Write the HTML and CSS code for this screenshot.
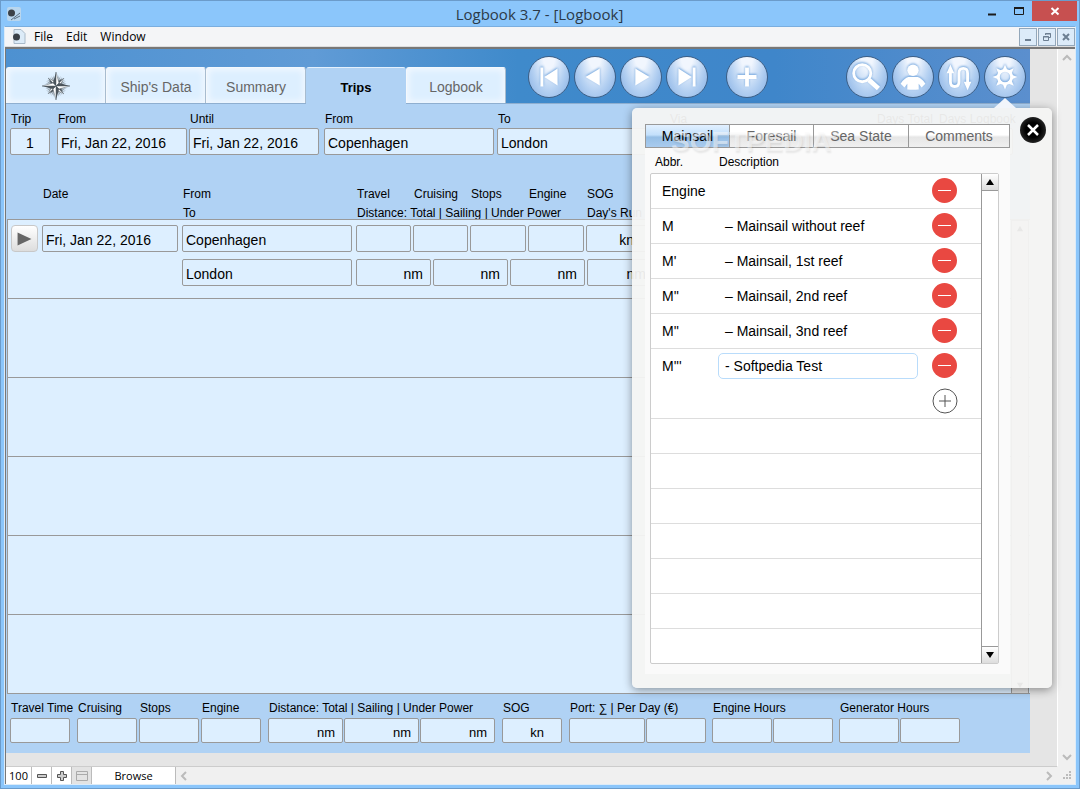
FILE: index.html
```html
<!DOCTYPE html>
<html lang="en">
<head>
    <meta charset="UTF-8">
    <meta name="viewport" content="width=device-width, initial-scale=1.0">
    <title>Logbook 3.7 - [Logbook]</title>
    <link rel="stylesheet" href="styles.css">
</head>
<body>

    <!-- Title Bar -->
    <header class="titlebar">
        <svg class="app-icon" viewBox="0 0 14 14">
            <rect width="14" height="14" rx="2" fill="#b9d6ee"/>
            <path d="M4 13L13 6M7 12L13 9" stroke="#5d6f80" stroke-width="1"/>
            <circle cx="4.500" cy="6" r="3.500" fill="#3b4148"/>
        </svg>
        <h1>Logbook 3.7 - [Logbook]</h1>
        <div class="window-buttons">
            <button aria-label="Minimize"><svg viewBox="0 0 12 12"><path d="M2 9.500h8" stroke="#1b1b1b" stroke-width="2"/></svg></button>
            <button aria-label="Maximize"><svg viewBox="0 0 12 12"><path d="M1.500 2.500h9v7h-9z" fill="none" stroke="#1b1b1b"/><path d="M1 3h10" stroke="#1b1b1b" stroke-width="2"/></svg></button>
            <button class="close" aria-label="Close"><svg viewBox="0 0 12 12"><path d="M2.500 3l7 6.500M9.500 3l-7 6.500" stroke="#fff" stroke-width="2"/></svg></button>
        </div>
    </header>

    <div class="client">
        <!-- Menu Bar -->
        <nav class="menubar">
            <svg class="doc-icon" viewBox="0 0 14 15">
                <path d="M2 .5h7l4 4v10H2z" fill="#dcebf8" stroke="#a9b9c8"/>
                <circle cx="4.500" cy="8" r="3.500" fill="#3b4148"/>
            </svg>
            <a href="#">File</a>
            <a href="#">Edit</a>
            <a href="#">Window</a>
            <div class="mdi-buttons">
                <button aria-label="Minimize document"><svg viewBox="0 0 12 12"><path d="M3 9h6" stroke="#6d7f92" stroke-width="2"/></svg></button>
                <button aria-label="Restore document"><svg viewBox="0 0 12 12"><path d="M4.500 4V2.500h5v4H8M2.500 5.500h5v4h-5zM2 6h6M4 3h6" fill="none" stroke="#6d7f92"/></svg></button>
                <button aria-label="Close document"><svg viewBox="0 0 12 12"><path d="M3 3l6 6M9 3l-6 6" stroke="#6d7f92" stroke-width="2"/></svg></button>
            </div>
        </nav>

        <div class="workspace">
            <main class="canvas">
                <div class="layout">

                    <div class="sky">
                        <div class="tabs">
                            <button class="tab" aria-label="Home">
                                <svg class="compass" viewBox="-14 -14 28 28">
                                    <defs>
                                        <g id="thin">
                                            <path d="M0-11L1-2h-2z" fill="#7d868d"/>
                                            <path d="M0-11L1-2h-2z" fill="#7d868d" transform="rotate(90)"/>
                                            <path d="M0-11L1-2h-2z" fill="#7d868d" transform="rotate(180)"/>
                                            <path d="M0-11L1-2h-2z" fill="#7d868d" transform="rotate(270)"/>
                                        </g>
                                        <g id="point">
                                            <path d="M0-14L3-3L0 0z" fill="#fff" stroke="#5a646c" stroke-width=".5"/>
                                            <path d="M0-14L-3-3L0 0z" fill="#4b545b"/>
                                        </g>
                                    </defs>
                                    <use href="#thin" transform="rotate(15)"/>
                                    <use href="#thin" transform="rotate(25)"/>
                                    <use href="#thin" transform="rotate(35)"/>
                                    <use href="#thin" transform="rotate(55)"/>
                                    <use href="#thin" transform="rotate(65)"/>
                                    <use href="#thin" transform="rotate(75)"/>
                                    <use href="#point" transform="rotate(45) scale(.8)"/>
                                    <use href="#point" transform="rotate(135) scale(.8)"/>
                                    <use href="#point" transform="rotate(225) scale(.8)"/>
                                    <use href="#point" transform="rotate(315) scale(.8)"/>
                                    <use href="#point"/>
                                    <use href="#point" transform="rotate(90)"/>
                                    <use href="#point" transform="rotate(180)"/>
                                    <use href="#point" transform="rotate(270)"/>
                                </svg>
                            </button>
                            <button class="tab">Ship's Data</button>
                            <button class="tab">Summary</button>
                            <button class="tab active">Trips</button>
                            <button class="tab">Logbook</button>
                        </div>
                        <div class="tools">
                            <button class="round" aria-label="First"><svg viewBox="0 0 42 42"><path d="M12 11h3v20h-3zM16 21l14-9v18z"/></svg></button>
                            <button class="round" aria-label="Previous"><svg viewBox="0 0 42 42"><path d="M11 21l15-9v18z"/></svg></button>
                            <button class="round" aria-label="Next"><svg viewBox="0 0 42 42"><path d="M30 21l-15-9v18z"/></svg></button>
                            <button class="round" aria-label="Last"><svg viewBox="0 0 42 42"><path d="M27 11h3v20h-3zM26 21l-14-9v18z"/></svg></button>
                        </div>
                        <div class="tools">
                            <button class="round" aria-label="Add trip"><svg viewBox="0 0 42 42"><path d="M19 11h4v8h8v4h-8v8h-4v-8h-8v-4h8z"/></svg></button>
                        </div>
                        <div class="tools right">
                            <button class="round" aria-label="Search"><svg viewBox="0 0 42 42"><circle cx="16" cy="17" r="9" class="line"/><path d="M23 24l10 9" class="line thick"/></svg></button>
                            <button class="round" aria-label="Crew"><svg viewBox="0 0 42 42"><circle cx="21" cy="14" r="6"/><path d="M16 21h10q4 1 8 7l-4 4-3-4v6q-6 1-12 0v-6l-3 4-4-4q4-6 8-7z"/></svg></button>
                            <button class="round" aria-label="Route"><svg viewBox="0 0 42 42"><path d="M12 15v11q0 5 4.500 5t4.500-5V17q0-5 4.500-5t4.500 5v11" class="line"/><path d="M12 8l4 9H8zM30 35l-4-9h8z"/></svg></button>
                            <button class="round" aria-label="Settings">
                                <svg viewBox="0 0 42 42">
                                    <circle cx="21" cy="21" r="7" class="line"/>
                                    <path d="M18 15L21 8l3 7z"/>
                                    <path d="M18 15L21 8l3 7z" transform="rotate(45 21 21)"/>
                                    <path d="M18 15L21 8l3 7z" transform="rotate(90 21 21)"/>
                                    <path d="M18 15L21 8l3 7z" transform="rotate(135 21 21)"/>
                                    <path d="M18 15L21 8l3 7z" transform="rotate(180 21 21)"/>
                                    <path d="M18 15L21 8l3 7z" transform="rotate(225 21 21)"/>
                                    <path d="M18 15L21 8l3 7z" transform="rotate(270 21 21)"/>
                                    <path d="M18 15L21 8l3 7z" transform="rotate(315 21 21)"/>
                                </svg>
                            </button>
                        </div>
                    </div>

                    <!-- Trip -->
                    <div class="detail">
                        <div class="trip">
                            <div class="field w40"><label for="trip">Trip</label><input id="trip" class="center" value="1"></div>
                            <div class="field w130"><label for="from-date">From</label><input id="from-date" value="Fri, Jan 22, 2016"></div>
                            <div class="field w130 near"><label for="until-date">Until</label><input id="until-date" value="Fri, Jan 22, 2016"></div>
                            <div class="field w170"><label for="from-port">From</label><input id="from-port" value="Copenhagen"></div>
                            <div class="field w170 near"><label for="to-port">To</label><input id="to-port" value="London"></div>
                            <div class="field w200 near"><label for="via">Via</label><input id="via"></div>
                            <div class="field w60"><label for="days-total">Days Total</label><input id="days-total"></div>
                            <div class="field w75 near"><label for="days-logbook">Days Logbook</label><input id="days-logbook"></div>
                        </div>
                        <div class="headings">
                            <label class="date" for="r-date">Date</label>
                            <div class="ports">
                                <label for="r-from">From</label>
                                <label for="r-to">To</label>
                            </div>
                            <div class="values">
                                <label for="r-travel">Travel</label>
                                <label for="r-cruising">Cruising</label>
                                <label for="r-stops">Stops</label>
                                <label for="r-engine">Engine</label>
                                <label for="r-sog">SOG</label>
                                <label class="distance" for="r-total">Distance: Total | Sailing | Under Power</label>
                                <label for="r-run">Day's Run</label>
                            </div>
                        </div>
                    </div>

                    <div class="records">
                        <div class="record">
                            <button class="go" aria-label="Open day"><svg viewBox="0 0 27 27"><path d="M6 7v14l15-7z"/></svg></button>
                            <input id="r-date" class="date" value="Fri, Jan 22, 2016">
                            <div class="ports">
                                <input id="r-from" value="Copenhagen">
                                <input id="r-to" value="London">
                            </div>
                            <div class="values-box">
                                <div class="values">
                                    <input id="r-travel">
                                    <input id="r-cruising">
                                    <input id="r-stops">
                                    <input id="r-engine">
                                    <input id="r-sog" class="num" value="kn">
                                </div>
                                <div class="miles">
                                    <input id="r-total" class="num" value="nm">
                                    <input aria-label="Sailing" class="num" value="nm">
                                    <input aria-label="Under Power" class="num" value="nm">
                                    <input id="r-run" class="num run" value="nm">
                                </div>
                            </div>
                        </div>
                        <div class="record"></div>
                        <div class="record"></div>
                        <div class="record"></div>
                        <div class="record"></div>
                        <div class="record"></div>
                        <div class="records-scroll">
                            <svg viewBox="0 0 10 8"><path d="M5 0l4 7H1z"/></svg>
                            <svg viewBox="0 0 10 8"><path d="M5 8l4-7H1z"/></svg>
                        </div>
                    </div>

                    <!-- Totals -->
                    <div class="totals">
                        <div class="field w60"><label for="t-travel">Travel Time</label><input id="t-travel"></div>
                        <div class="field w60"><label for="t-cruising">Cruising</label><input id="t-cruising"></div>
                        <div class="field w60 near"><label for="t-stops">Stops</label><input id="t-stops"></div>
                        <div class="field w60 near"><label for="t-engine">Engine</label><input id="t-engine"></div>
                        <div class="field">
                            <label for="t-total">Distance: Total | Sailing | Under Power</label>
                            <div class="pair">
                                <input id="t-total" class="num w75" value="nm">
                                <input aria-label="Total sailing" class="num w75" value="nm">
                                <input aria-label="Total under power" class="num w75" value="nm">
                            </div>
                        </div>
                        <div class="field w60"><label for="t-sog">SOG</label><input id="t-sog" class="num wide" value="kn"></div>
                        <div class="field hours">
                            <label for="t-port">Port: ∑ | Per Day (€)</label>
                            <div class="pair"><input id="t-port" class="w76"><input aria-label="Port per day" class="w60"></div>
                        </div>
                        <div class="field hours">
                            <label for="t-eng">Engine Hours</label>
                            <div class="pair"><input id="t-eng" class="w60"><input aria-label="Engine hours total" class="w60"></div>
                        </div>
                        <div class="field hours">
                            <label for="t-gen">Generator Hours</label>
                            <div class="pair"><input id="t-gen" class="w60"><input aria-label="Generator hours total" class="w60"></div>
                        </div>
                    </div>

                    <!-- Settings Popover -->
                    <section class="popover">
                        <button class="dismiss" aria-label="Close settings"><svg viewBox="0 0 26 26"><path d="M8 8l10 10M18 8L8 18" stroke="#fff" stroke-width="2.500"/></svg></button>
                        <div class="segments">
                            <button class="on">Mainsail</button>
                            <button>Foresail</button>
                            <button>Sea State</button>
                            <button>Comments</button>
                        </div>
                        <div class="watermark">SOFTPEDIA<sup>®</sup></div>
                        <div class="panel">
                            <div class="panel-head"><span>Abbr.</span><span>Description</span></div>
                            <div class="list">
                                <ul>
                                    <li><span>Engine</span><span></span><button class="minus" aria-label="Remove Engine"></button></li>
                                    <li><span>M</span><span>– Mainsail without reef</span><button class="minus" aria-label="Remove M"></button></li>
                                    <li><span>M'</span><span>– Mainsail, 1st reef</span><button class="minus" aria-label="Remove M'"></button></li>
                                    <li><span>M''</span><span>– Mainsail, 2nd reef</span><button class="minus" aria-label="Remove M''"></button></li>
                                    <li><span>M''</span><span>– Mainsail, 3nd reef</span><button class="minus" aria-label="Remove M''"></button></li>
                                    <li class="open"><span>M'''</span><input aria-label="Description" value="- Softpedia Test"><button class="minus" aria-label="Remove M'''"></button></li>
                                    <li><span></span><span></span><button class="plus" aria-label="Add"><svg viewBox="0 0 26 26"><circle cx="13" cy="13" r="12"/><path d="M7 13h12M13 7v12"/></svg></button></li>
                                    <li></li>
                                    <li></li>
                                    <li></li>
                                    <li></li>
                                    <li></li>
                                    <li></li>
                                    <li></li>
                                </ul>
                                <div class="list-scroll">
                                    <button aria-label="Scroll up"><svg viewBox="0 0 10 8"><path d="M5 1l4 6H1z"/></svg></button>
                                    <button aria-label="Scroll down"><svg viewBox="0 0 10 8"><path d="M5 7l4-6H1z"/></svg></button>
                                </div>
                            </div>
                        </div>
                    </section>
                </div>
            </main>

            <div class="vscroll">
                <svg viewBox="0 0 10 8"><path d="M1 6l4-4 4 4"/></svg>
                <svg viewBox="0 0 10 8"><path d="M1 2l4 4 4-4"/></svg>
            </div>

            <!-- Status Bar -->
            <footer class="status">
                <span class="zoom">100</span>
                <button aria-label="Zoom out"><svg viewBox="0 0 12 12"><path d="M1.500 4.500h9v3h-9z" fill="#ccc" stroke="#555"/></svg></button>
                <button aria-label="Zoom in"><svg viewBox="0 0 12 12"><path d="M4.500 1.500h3v3h3v3h-3v3h-3v-3h-3v-3h3z" fill="#ccc" stroke="#555"/></svg></button>
                <button class="off" aria-label="Status area"><svg viewBox="0 0 12 12"><path d="M.5 1.500h11v9H.5zM.5 4.500h11" fill="none" stroke="#aaa"/></svg></button>
                <button class="mode">Browse</button>
                <div class="hscroll">
                    <svg viewBox="0 0 8 10"><path d="M6 1L2 5l4 4"/></svg>
                    <svg viewBox="0 0 8 10"><path d="M2 1l4 4-4 4"/></svg>
                </div>
            </footer>
            <svg class="grip" viewBox="0 0 18 18"><path d="M12 5h2v2h-2zM9 8h2v2H9zM12 8h2v2h-2zM6 11h2v2H6zM9 11h2v2H9zM12 11h2v2h-2z"/></svg>
        </div>
    </div>

</body>
</html>
```

FILE: styles.css
```css
/* Global Styles */
* {
    box-sizing: border-box;
}

body {
    margin: 0;
    min-height: 100vh;
    display: flex;
    flex-direction: column;
    background-color: #8bc6fb;
    border: 1px solid #6b9bca;
    font-family: 'Liberation Sans', Arial, sans-serif;
    font-size: 14px;
    color: #000;
}

button {
    font: inherit;
    padding: 0;
    border: none;
    background: none;
    cursor: pointer;
}

svg {
    display: block;
}

input {
    display: block;
    width: 100%;
    height: 27px;
    margin: 0;
    padding: 2px 3px 0;
    border: 1px solid #999;
    border-radius: 2px;
    background-color: #ddefff;
    font: inherit;
    color: #000;
}

.center {
    text-align: center;
}

.num {
    text-align: right;
    padding-right: 7px;
}

/* Title Bar */
.titlebar {
    display: flex;
    align-items: center;
    height: 25px;
    padding-left: 6px;
}

.app-icon {
    width: 14px;
    height: 14px;
}

.titlebar h1 {
    flex: 1;
    margin: 0;
    padding-left: 80px;
    text-align: center;
    font: 15px 'Open Sans', sans-serif;
    color: #2b3a48;
}

.window-buttons {
    display: flex;
    align-self: flex-start;
    padding-right: 2px;
}

.window-buttons button {
    display: flex;
    align-items: center;
    justify-content: center;
    width: 27px;
    height: 20px;
}

.window-buttons .close {
    width: 45px;
    background-color: #c75050;
}

.window-buttons svg,
.mdi-buttons svg {
    width: 12px;
    height: 12px;
}

.client {
    flex: 1;
    display: flex;
    flex-direction: column;
    margin: 0 3px 3px;
    border: 1px solid #dcebf8;
    border-top-color: #7aaedf;
}

/* Menu Bar */
.menubar {
    display: flex;
    align-items: center;
    gap: 13px;
    height: 20px;
    padding-left: 7px;
    background-color: #f4f5f7;
    border-bottom: 1px solid #ddd;
    font: 12px 'Open Sans', sans-serif;
}

.menubar a {
    color: #000;
    text-decoration: none;
}

.doc-icon {
    width: 14px;
    height: 15px;
    margin-right: -5px;
}

.mdi-buttons {
    display: flex;
    gap: 1px;
    margin-left: auto;
}

.mdi-buttons button {
    display: flex;
    align-items: center;
    justify-content: center;
    width: 18px;
    height: 18px;
    background-color: #dcebf9;
    border: 1px solid #93a7ba;
}

.workspace {
    flex: 1;
    display: grid;
    grid-template-columns: 1fr 18px;
    grid-template-rows: 1fr 18px;
    border-top: 2px solid #777;
    border-left: 1px solid #777;
}

.canvas {
    padding: 0 27px 13px 0;
    background-color: #e5e5e5;
}

.layout {
    position: relative;
    background-color: #b0d2f4;
}

/* Tabs and Toolbar */
.sky {
    display: flex;
    align-items: flex-end;
    height: 55px;
    border-bottom: 1px solid #8fafd0;
    background: linear-gradient(to right, #4d91d1, #609bd6 30%, #3f8acb 50%, #3f86ca 75%, #5b8fce);
}

.tabs {
    display: flex;
    margin-right: 4px;
}

.tab {
    width: 100px;
    height: 36px;
    padding-top: 2px;
    background-color: #ddefff;
    border: 1px solid #f4f8fc;
    border-right-color: #a8bccf;
    border-bottom: none;
    border-radius: 3px 3px 0 0;
    box-shadow: inset 0 0 6px 2px #f2f8ff;
    color: #666;
}

.tab.active {
    height: 37px;
    margin-bottom: -1px;
    background-color: #b0d2f4;
    border-color: #e4f0fc #b0d2f4;
    box-shadow: none;
    font-size: 13px;
    font-weight: bold;
    color: #000;
}

.compass {
    width: 28px;
    height: 28px;
    margin: -2px auto 0;
}

.tools {
    display: flex;
    gap: 4px;
    margin: 0 0 5px 18px;
}

.tools.right {
    margin-left: auto;
    margin-right: 4px;
}

.round {
    width: 42px;
    height: 42px;
    border: 1px solid #3d5f86;
    border-radius: 50%;
    background: radial-gradient(ellipse at 50% 0, #f1f6fe 20%, #b5d1f2 60%, #84aee3);
}

.round svg {
    width: 40px;
    height: 40px;
    fill: #fff;
    filter: drop-shadow(0 -1px 1px #6fa3dc);
}

.round .line {
    fill: none;
    stroke: #fff;
    stroke-width: 3;
}

.round .thick {
    stroke-width: 5;
}

/* Trip */
.detail {
    height: 115px;
    padding: 7px 0 0 4px;
}

.trip,
.totals {
    display: flex;
    white-space: nowrap;
}

.field {
    flex: none;
    margin-right: 7px;
}

.field:has(+ .near) {
    margin-right: 2px;
}

.trip .field:nth-child(3) {
    margin-right: 5px;
}

.trip .field:nth-child(4) {
    margin-right: 3px;
}

.field label {
    display: block;
    height: 17px;
    padding-left: 1px;
    line-height: 16px;
    font-size: 12px;
}

.w40 { width: 40px; }
.w60 { width: 60px; }
.w75 { width: 75px; }
.w76 { width: 76px; }
.w130 { width: 130px; }
.w170 { width: 170px; }
.w200 { width: 200px; }

.headings {
    display: flex;
    gap: 4px;
    height: 34px;
    margin-top: 30px;
    padding-left: 31px;
    line-height: 19px;
    font-size: 12px;
    white-space: nowrap;
}

.headings label {
    display: block;
    padding-left: 2px;
}

.date {
    flex: none;
    width: 136px;
}

.ports {
    flex: none;
    width: 170px;
}

.values {
    display: grid;
    grid-template-columns: 55px 55px 56px 56px 75px;
    column-gap: 2px;
}

.headings .distance {
    grid-column: span 4;
}

/* Records */
.records {
    position: relative;
    margin-left: 1px;
    background-color: #ddefff;
    border-top: 1px solid #999;
    border-left: 1px solid #999;
}

.record {
    display: flex;
    gap: 4px;
    height: 79px;
    padding: 5px 0 0 3px;
    border-bottom: 1px solid #999;
}

.record .ports,
.values-box {
    display: flex;
    flex-direction: column;
    gap: 7px;
}

.miles {
    display: grid;
    grid-template-columns: repeat(4, 75px);
    gap: 2px;
}

#r-sog {
    padding-right: 26px;
}

.miles .run {
    padding-right: 15px;
}

.go {
    width: 27px;
    height: 27px;
    border: 1px solid #c8c8c8;
    border-radius: 4px;
    background: linear-gradient(#fff, #ddd);
}

.go svg {
    width: 25px;
    height: 25px;
    fill: #666;
}

.records-scroll {
    position: absolute;
    top: 0;
    right: 1px;
    bottom: 0;
    width: 18px;
    display: flex;
    flex-direction: column;
    justify-content: space-between;
    align-items: center;
    padding: 5px 0;
    border: 1px solid #999;
    background-color: #ddd;
}

.records-scroll svg {
    width: 8px;
    height: 6px;
}

/* Totals */
.totals {
    padding: 6px 0 10px 4px;
}

.totals label {
    height: 18px;
}

.totals input {
    height: 25px;
    padding-top: 3px;
    font-size: 13px;
}

.totals .wide {
    padding-right: 17px;
}

.totals .hours {
    margin-right: 6px;
}

.pair {
    display: flex;
    gap: 1px;
}

.pair .w60 { width: 60px; }
.pair .w75 { width: 75px; }
.pair .w76 { width: 76px; }

/* Settings Popover */
.popover {
    position: absolute;
    top: 59px;
    right: -22px;
    width: 420px;
    padding: 16px 42px 14px 13px;
    background-color: rgba(244, 244, 243, 0.95);
    border-radius: 5px;
    box-shadow: 0 2px 10px rgba(0, 0, 0, 0.4);
}

.popover::before {
    content: "";
    position: absolute;
    top: -10px;
    right: 36px;
    border: 11px solid transparent;
    border-top: none;
    border-bottom: 10px solid #f1f5fb;
}

.dismiss {
    position: absolute;
    top: 9px;
    right: 6px;
    width: 26px;
    height: 26px;
    border-radius: 50%;
    background: radial-gradient(#000 40%, #444);
}

.segments {
    display: grid;
    grid-template-columns: 84px 84px 95px 101px;
    width: 365px;
    height: 24px;
    border-left: 1px solid #999;
}

.segments button {
    border: 1px solid #999;
    border-left: none;
    background: linear-gradient(#fff 45%, #e6e6e6 55%, #f0f0f0);
    color: #666;
}

.segments .on {
    background: linear-gradient(#e2f0ff, #c3e0fb 45%, #96bfe6 55%, #a9cbee);
    color: #000;
}

.watermark {
    position: absolute;
    top: 12px;
    left: 39px;
    font-size: 28px;
    font-weight: bold;
    line-height: 32px;
    color: rgba(250, 250, 250, 0.5);
    text-shadow: 1px 2px 2px rgba(0, 0, 0, 0.08);
    pointer-events: none;
}

.watermark sup {
    font-size: 10px;
    vertical-align: 12px;
}

.panel {
    padding: 6px 11px 10px 5px;
    background-color: #fafafa;
}

.panel-head {
    display: grid;
    grid-template-columns: 64px 1fr;
    height: 19px;
    padding-left: 5px;
    line-height: 16px;
    font-size: 12px;
}

.list {
    display: flex;
    border: 1px solid #ccc;
    border-radius: 2px;
    background-color: #fff;
}

.list ul {
    flex: 1;
    margin: 0;
    padding: 0;
    list-style: none;
}

.list li {
    display: grid;
    grid-template-columns: 56px 214px 26px;
    align-items: center;
    height: 35px;
    padding-left: 11px;
    border-bottom: 1px solid #ddd;
}

.list li:last-child {
    height: 34px;
    border-bottom: none;
}

.list li.open {
    border-bottom-color: #fff;
}

.list li span:nth-child(2) {
    padding-left: 7px;
}

.list input {
    width: 200px;
    height: 26px;
    padding: 0 6px;
    border-color: #b9dcfb;
    border-radius: 5px;
    background-color: #fff;
}

.minus {
    display: flex;
    align-items: center;
    justify-content: center;
    width: 25px;
    height: 25px;
    margin-bottom: 1px;
    border-radius: 50%;
    background-color: #e94841;
}

.minus::before {
    content: "";
    width: 13px;
    height: 1px;
    background-color: #fff;
}

.plus svg {
    width: 26px;
    height: 26px;
    fill: none;
    stroke: #555;
}

.list-scroll {
    display: flex;
    flex-direction: column;
    justify-content: space-between;
    width: 17px;
    border-left: 1px solid #999;
}

.list-scroll button {
    display: flex;
    align-items: center;
    justify-content: center;
    height: 17px;
    background: linear-gradient(#fff, #ddd);
    border-bottom: 1px solid #999;
}

.list-scroll button:last-child {
    border-top: 1px solid #999;
    border-bottom: none;
}

.list-scroll svg {
    width: 10px;
    height: 8px;
}

/* Scrollbars and Status Bar */
.vscroll {
    display: flex;
    flex-direction: column;
    justify-content: space-between;
    align-items: center;
    padding: 5px 0;
    background-color: #f0f0f0;
    border-left: 1px solid #fff;
}

.vscroll svg {
    width: 10px;
    height: 8px;
}

.vscroll path,
.hscroll path {
    fill: none;
    stroke: #bbb;
    stroke-width: 2;
}

.status {
    display: flex;
    background-color: #f0f0f0;
    border-top: 1px solid #ccc;
    font: 11px 'Open Sans', sans-serif;
}

.status button,
.zoom {
    display: flex;
    align-items: center;
    justify-content: center;
    width: 20px;
    background-color: #fff;
    border-right: 1px solid #bbb;
}

.status .zoom {
    width: 26px;
}

.status .off {
    background-color: #e3e3e3;
}

.status .mode {
    width: 84px;
}

.status button svg {
    width: 12px;
    height: 12px;
}

.hscroll {
    flex: 1;
    display: flex;
    justify-content: space-between;
    align-items: center;
    padding: 0 4px;
}

.hscroll svg {
    width: 8px;
    height: 10px;
}

.grip {
    width: 18px;
    height: 18px;
    background-color: #f0f0f0;
    fill: #bbb;
}
```
